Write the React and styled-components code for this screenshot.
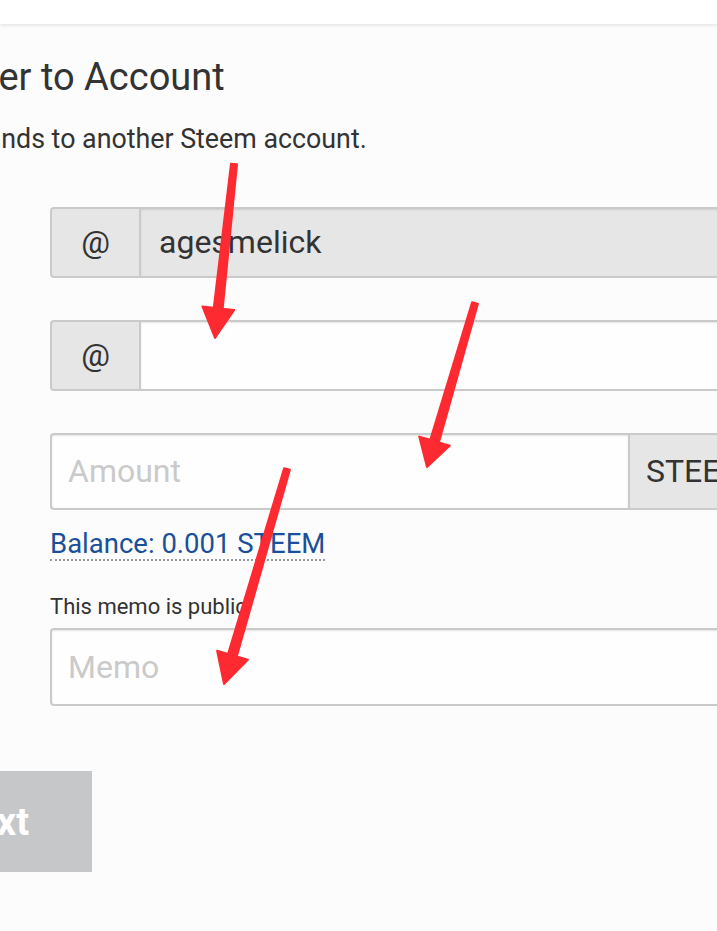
import React from "react";
import styled, { createGlobalStyle } from "styled-components";

const GlobalStyle = createGlobalStyle`
  html, body {
    margin: 0;
    padding: 0;
    background: #fcfcfc;
    font-family: Roboto, "Liberation Sans", sans-serif;
    overflow: hidden;
  }
  * {
    box-sizing: border-box;
  }
`;

const Page = styled.div`
  position: relative;
  width: 717px;
  height: 931px;
  overflow: hidden;
  background: #fcfcfc;
`;

const TopBar = styled.div`
  height: 24px;
  background: #fff;
  box-shadow: 0 1px 4px rgba(0, 0, 0, 0.12);
`;

const Title = styled.h1`
  margin: 34px 0 0 -109px;
  font-size: 38px;
  font-weight: 400;
  line-height: 1;
  color: #333;
  white-space: nowrap;
`;

const Subtitle = styled.p`
  margin: 30px 0 0 -95px;
  font-size: 26.8px;
  line-height: 1;
  color: #333;
  white-space: nowrap;
`;

const Form = styled.form`
  display: flex;
  flex-direction: column;
  margin: 54px 0 0 50px;
  width: 760px;
`;

const Group = styled.div`
  display: flex;
  height: ${(p) => p.$h}px;
  margin-top: ${(p) => p.$gap || 0}px;
`;

const Addon = styled.span`
  display: flex;
  align-items: center;
  justify-content: ${(p) => (p.$left ? "flex-start" : "center")};
  flex: 0 0 ${(p) => p.$w}px;
  padding-left: ${(p) => (p.$left ? 16 : 0)}px;
  background: #e6e6e6;
  border: 2px solid #cacaca;
  border-radius: ${(p) => (p.$left ? "0 4px 4px 0" : "4px 0 0 4px")};
  font-size: 32px;
  color: #333;
`;

const Field = styled.input`
  flex: 1;
  min-width: 0;
  height: 100%;
  padding: 0 16px;
  font-family: Roboto, "Liberation Sans", sans-serif;
  font-size: 32px;
  color: #333;
  -webkit-text-fill-color: #333;
  background: ${(p) => (p.$locked ? "#e6e6e6" : "#fefefe")};
  border: 2px solid #cacaca;
  ${(p) => (p.$joinLeft ? "border-left: none; padding-left: 18px;" : "")}
  ${(p) => (p.$joinRight ? "border-right: none;" : "")}
  border-radius: ${(p) =>
    p.$joinLeft ? "0 4px 4px 0" : p.$joinRight ? "4px 0 0 4px" : "4px"};
  box-shadow: inset 0 1px 2px rgba(10, 10, 10, 0.1);
  outline: none;
  &::placeholder {
    color: #cacaca;
    -webkit-text-fill-color: #cacaca;
  }
`;

const BalanceRow = styled.div`
  margin-top: 20px;
`;

const Balance = styled.a`
  display: inline-block;
  font-size: 27.5px;
  line-height: 1;
  padding-bottom: 2px;
  color: #1a5099;
  text-decoration: none;
  border-bottom: 2px dotted #999;
`;

const MemoLabel = styled.label`
  display: block;
  margin: 35px 0 10px;
  font-size: 22px;
  line-height: 1;
  color: #333;
`;

const NextButton = styled.button`
  display: block;
  width: 204px;
  height: 101px;
  margin: 65px 0 0 -112px;
  border: none;
  border-radius: 0;
  background: #c6c7c9;
  color: #fff;
  font-family: Roboto, "Liberation Sans", sans-serif;
  font-size: 38px;
  font-weight: 700;
  text-align: right;
  padding: 0 63px 0 0;
`;

const Marks = styled.svg`
  position: absolute;
  inset: 0;
  pointer-events: none;
`;

// tapered shaft plus a triangular head, from tail to tip
function arrowPoints([tx, ty], [px, py], headLen, headW) {
  const dx = px - tx;
  const dy = py - ty;
  const len = Math.hypot(dx, dy);
  const ux = dx / len;
  const uy = dy / len;
  const nx = -uy;
  const ny = ux;
  const bx = px - ux * headLen;
  const by = py - uy * headLen;
  const t0 = 3;
  const t1 = 4.5;
  const h = headW / 2;
  const pts = [
    [tx + nx * t0, ty + ny * t0],
    [bx + nx * t1, by + ny * t1],
    [bx + nx * h, by + ny * h],
    [px, py],
    [bx - nx * h, by - ny * h],
    [bx - nx * t1, by - ny * t1],
    [tx - nx * t0, ty - ny * t0],
  ];
  return pts.map((q) => q.map((v) => v.toFixed(1)).join(",")).join(" ");
}

const arrows = [
  { tail: [234, 164], tip: [215, 338], head: 30, w: 32 },
  { tail: [475, 303], tip: [427, 467], head: 27, w: 32 },
  { tail: [287, 469], tip: [224, 684], head: 30, w: 32 },
];

export default function App() {
  return (
    <Page>
      <GlobalStyle />
      <TopBar />
      <Title>Transfer to Account</Title>
      <Subtitle>Move funds to another Steem account.</Subtitle>
      <Form onSubmit={(e) => e.preventDefault()}>
        <Group $h={71}>
          <Addon $w={91}>@</Addon>
          <Field $locked $joinLeft readOnly value="agesmelick" />
        </Group>
        <Group $h={71} $gap={42}>
          <Addon $w={91}>@</Addon>
          <Field $joinLeft defaultValue="" />
        </Group>
        <Group $h={77} $gap={42}>
          <Field $joinRight placeholder="Amount" />
          <Addon $w={182} $left>
            STEEM
          </Addon>
        </Group>
        <BalanceRow>
          <Balance>Balance: 0.001 STEEM</Balance>
        </BalanceRow>
        <MemoLabel>This memo is public</MemoLabel>
        <Group $h={78}>
          <Field placeholder="Memo" />
        </Group>
      </Form>
      <NextButton>Next</NextButton>
      <Marks width="717" height="931" viewBox="0 0 717 931">
        {arrows.map((a, i) => (
          <polygon
            key={i}
            points={arrowPoints(a.tail, a.tip, a.head, a.w)}
            fill="#fe2a31"
            stroke="#fe2a31"
            strokeWidth="2"
            strokeLinejoin="round"
          />
        ))}
      </Marks>
    </Page>
  );
}
